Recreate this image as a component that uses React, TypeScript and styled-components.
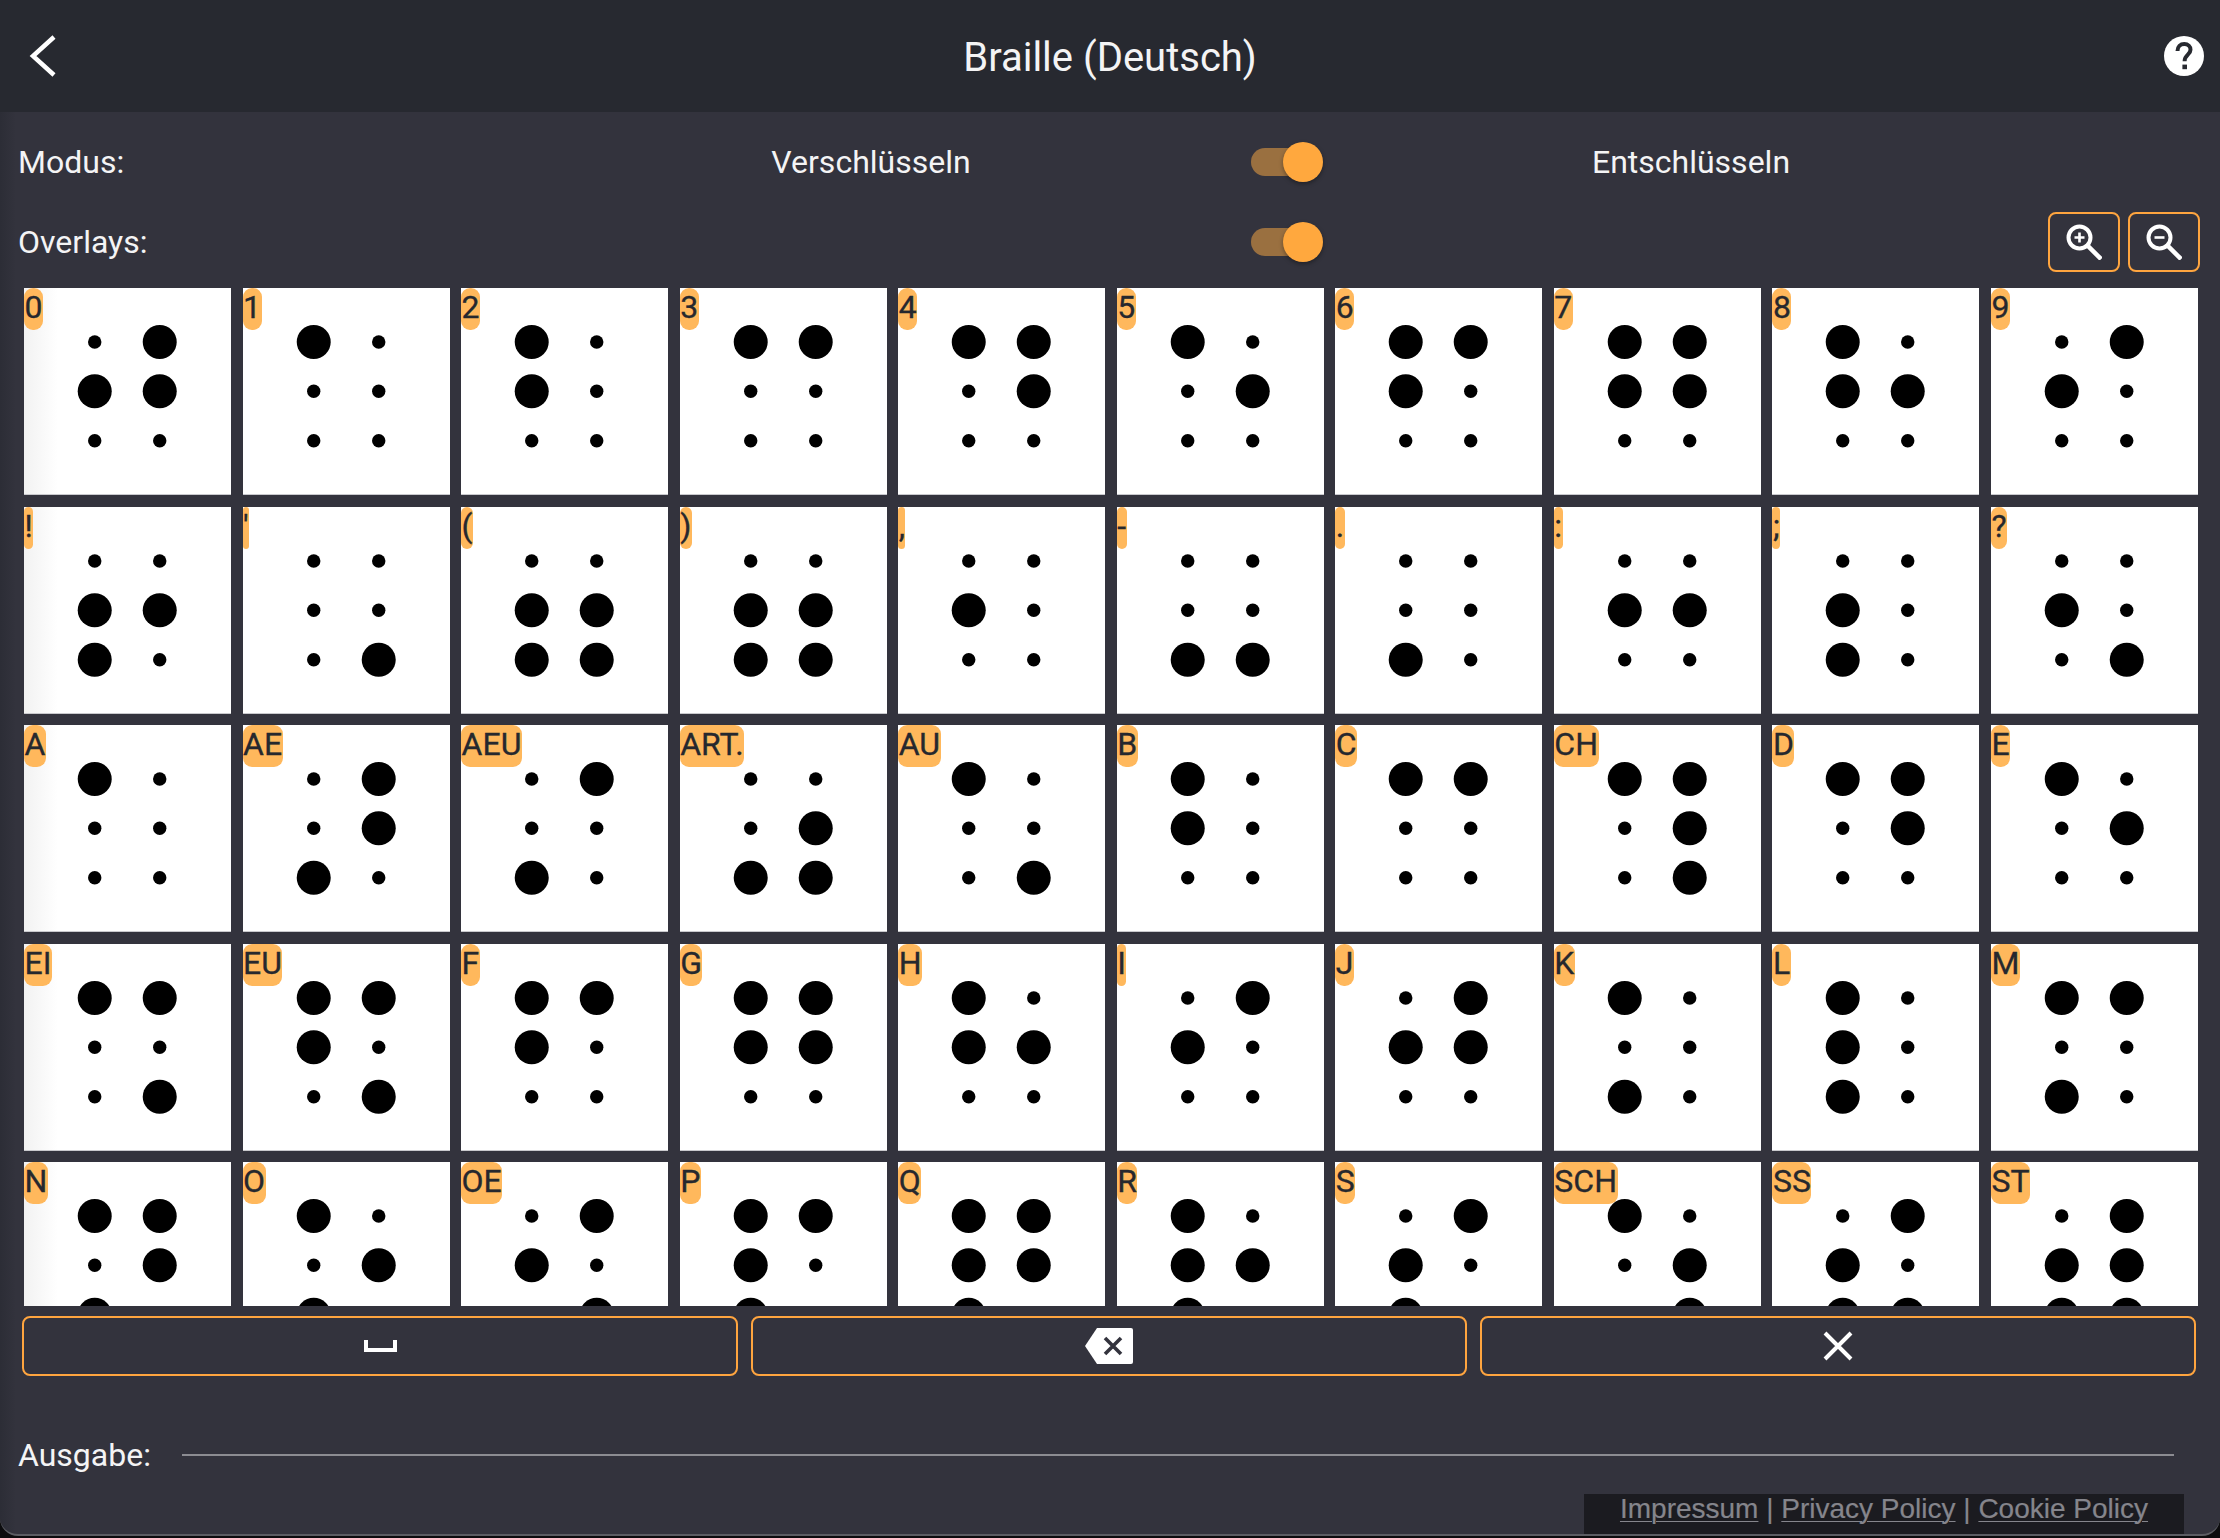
import React from "react";
import styled, { createGlobalStyle } from "styled-components";

const GlobalStyle = createGlobalStyle`
  html, body {
    margin: 0;
    padding: 0;
    background: #0c0c0e;
  }
  * {
    box-sizing: border-box;
  }
`;

const Page = styled.div`
  position: relative;
  width: 2220px;
  height: 1536px;
  overflow: hidden;
  border-bottom: 2px solid #5c5d63;
  border-radius: 0 0 18px 18px;
  background: linear-gradient(90deg, #2c2d36 0, #33333d 16px);
  color: #f4f4f5;
  font-family: Roboto, "Liberation Sans", sans-serif;
`;

const Header = styled.header`
  display: grid;
  grid-template-columns: 1fr auto 1fr;
  align-items: center;
  height: 112px;
  padding: 0 16px;
  background: #272930;
`;

const Title = styled.h1`
  margin: 2px 0 0;
  font-size: 40px;
  font-weight: 400;
`;

const HeaderIcon = styled.svg<{ $end?: boolean }>`
  display: block;
  justify-self: ${(props) => (props.$end ? "end" : "start")};
  margin-left: ${(props) => (props.$end ? "0" : "12px")};
`;

const Controls = styled.section`
  padding: 10px 20px 0 18px;
`;

const ControlRow = styled.div`
  display: grid;
  grid-template-columns: 562px 582px 250px 558px 1fr;
  align-items: center;
  height: 80px;
  font-size: 32px;
`;

const CenterText = styled.span`
  text-align: center;
`;

const ToggleCell = styled.div`
  display: flex;
  justify-content: center;
`;

const Toggle = styled.div`
  position: relative;
  width: 72px;
  height: 40px;
  display: flex;
  align-items: center;
`;

const Track = styled.div`
  width: 60px;
  height: 28px;
  border-radius: 14px;
  background: #9a7040;
`;

const Thumb = styled.div`
  position: absolute;
  top: 0;
  right: 0;
  width: 40px;
  height: 40px;
  border-radius: 50%;
  background: #ffa83e;
  box-shadow: 0 2px 4px rgba(0, 0, 0, 0.35);
`;

const ZoomButtons = styled.div`
  display: flex;
  justify-content: flex-end;
  gap: 8px;
`;

const OutlineButton = styled.button<{ $w?: number }>`
  display: flex;
  align-items: center;
  justify-content: center;
  width: ${(props) => (props.$w ? props.$w + "px" : "auto")};
  height: 60px;
  padding: 0;
  border: 2px solid #ffa53f;
  border-radius: 8px;
  background: transparent;
`;

const Grid = styled.div`
  display: grid;
  grid-template-columns: repeat(10, 1fr);
  grid-auto-rows: 207px;
  gap: 11.5px;
  height: 1018px;
  margin: 6px 22px 0 24px;
  overflow: hidden;
`;

const Tile = styled.div<{ $first: boolean }>`
  position: relative;
  background: ${(props) =>
    props.$first ? "linear-gradient(90deg, #f2f2f2, #fff 34px)" : "#fff"};
  box-shadow: inset 0 -1px 0 #c9c9cd;
`;

const TileLabel = styled.span`
  position: absolute;
  top: 0;
  left: 0;
  height: 42px;
  padding: 0 0.5px;
  border-radius: 9px;
  background: #ffb85c;
  color: #26282e;
  font-size: 32px;
  line-height: 38px;
  -webkit-text-stroke: 0.3px #26282e;
`;

const Cell = styled.svg`
  display: block;
  width: 100%;
  height: 100%;
`;

const KeyRow = styled.div`
  display: grid;
  grid-template-columns: repeat(3, 1fr);
  gap: 13px;
  margin: 10px 24px 0 22px;
`;

const OutputRow = styled.div`
  display: flex;
  align-items: center;
  gap: 31px;
  height: 60px;
  margin-top: 49px;
  padding: 0 46px 0 18px;
  font-size: 32px;
`;

const OutputLine = styled.div`
  flex: 1;
  height: 2px;
  background: #8c8c92;
`;

const Footer = styled.footer`
  position: absolute;
  right: 36px;
  bottom: 0;
  width: 600px;
  height: 40px;
  padding-top: 1px;
  background: #1b1b20;
  color: #85858c;
  font-family: "Liberation Sans", Arial, sans-serif;
  font-size: 28px;
  line-height: 28px;
  text-align: center;
  -webkit-text-stroke: 0.2px #85858c;
`;

const FooterLink = styled.a`
  color: inherit;
  text-decoration: underline;
  text-underline-offset: 3px;
  text-decoration-thickness: 1px;
`;

// raised dots per cell: 1-3 left column, 4-6 right column
const CELLS: [string, string][] = [
  ["0", "245"], ["1", "1"], ["2", "12"], ["3", "14"], ["4", "145"],
  ["5", "15"], ["6", "124"], ["7", "1245"], ["8", "125"], ["9", "24"],
  ["!", "235"], ["'", "6"], ["(", "2356"], [")", "2356"], [",", "2"],
  ["-", "36"], [".", "3"], [":", "25"], [";", "23"], ["?", "26"],
  ["A", "1"], ["AE", "345"], ["AEU", "34"], ["ART.", "356"], ["AU", "16"],
  ["B", "12"], ["C", "14"], ["CH", "1456"], ["D", "145"], ["E", "15"],
  ["EI", "146"], ["EU", "1246"], ["F", "124"], ["G", "1245"], ["H", "125"],
  ["I", "24"], ["J", "245"], ["K", "13"], ["L", "123"], ["M", "134"],
  ["N", "1345"], ["O", "135"], ["OE", "246"], ["P", "1234"], ["Q", "12345"],
  ["R", "1235"], ["S", "234"], ["SCH", "156"], ["SS", "2346"], ["ST", "23456"],
];

const DOTS = [
  { id: "1", x: 70.7, y: 54 },
  { id: "2", x: 70.7, y: 103.3 },
  { id: "3", x: 70.7, y: 152.7 },
  { id: "4", x: 135.7, y: 54 },
  { id: "5", x: 135.7, y: 103.3 },
  { id: "6", x: 135.7, y: 152.7 },
];

function BrailleTile({ label, dots, first }: { label: string; dots: string; first: boolean }) {
  return (
    <Tile $first={first}>
      <Cell viewBox="0 0 207 207">
        {DOTS.map((d) => (
          <circle key={d.id} cx={d.x} cy={d.y} r={dots.includes(d.id) ? 17 : 6.7} fill="#000" />
        ))}
      </Cell>
      <TileLabel>{label}</TileLabel>
    </Tile>
  );
}

function ToggleSwitch() {
  return (
    <ToggleCell>
      <Toggle>
        <Track />
        <Thumb />
      </Toggle>
    </ToggleCell>
  );
}

function ZoomIcon({ plus }: { plus: boolean }) {
  return (
    <svg width="36" height="36" viewBox="0 0 36 36" fill="none" stroke="#fff" strokeWidth="4">
      <circle cx="13.5" cy="13.5" r="11" />
      <path d="M22 22L33.5 33.5" strokeLinecap="square" strokeWidth="4.5" />
      <path d={plus ? "M8.5 13.5h10M13.5 8.5v10" : "M8.5 13.5h10"} strokeWidth="2.6" />
    </svg>
  );
}

export default function App() {
  return (
    <Page>
      <GlobalStyle />
      <Header>
        <HeaderIcon width="30" height="44" viewBox="0 0 30 44" fill="none" stroke="#fff" strokeWidth="4.5">
          <path d="M26 3L5 22l21 19" />
        </HeaderIcon>
        <Title>Braille (Deutsch)</Title>
        <HeaderIcon $end width="40" height="40" viewBox="0 0 40 40">
          <circle cx="20" cy="20" r="20" fill="#fff" />
          <path
            d="M13.5 15c0-4.5 2.8-7 6.8-7 3.8 0 6.2 2.4 6.2 5.7 0 5-5.9 5-5.9 11.5"
            fill="none"
            stroke="#272930"
            strokeWidth="4"
          />
          <rect x="18.4" y="28.6" width="4.6" height="4.6" fill="#272930" />
        </HeaderIcon>
      </Header>

      <Controls>
        <ControlRow>
          <span>Modus:</span>
          <CenterText>Verschlüsseln</CenterText>
          <ToggleSwitch />
          <CenterText>Entschlüsseln</CenterText>
        </ControlRow>
        <ControlRow>
          <span>Overlays:</span>
          <span />
          <ToggleSwitch />
          <span />
          <ZoomButtons>
            <OutlineButton $w={72}>
              <ZoomIcon plus />
            </OutlineButton>
            <OutlineButton $w={72}>
              <ZoomIcon plus={false} />
            </OutlineButton>
          </ZoomButtons>
        </ControlRow>
      </Controls>

      <Grid>
        {CELLS.map(([label, dots], i) => (
          <BrailleTile key={label + i} label={label} dots={dots} first={i % 10 === 0} />
        ))}
      </Grid>

      <KeyRow>
        <OutlineButton>
          <svg width="33" height="12" viewBox="0 0 33 12" fill="none" stroke="#fff" strokeWidth="4">
            <path d="M2 0v10h29V0" />
          </svg>
        </OutlineButton>
        <OutlineButton>
          <svg width="48" height="36" viewBox="0 0 48 36">
            <path d="M12 0h34a2 2 0 0 1 2 2v32a2 2 0 0 1-2 2H12L0 18z" fill="#fff" />
            <path d="M20 10l16 16M36 10L20 26" stroke="#33333d" strokeWidth="3.6" fill="none" />
          </svg>
        </OutlineButton>
        <OutlineButton>
          <svg width="30" height="30" viewBox="0 0 30 30" fill="none" stroke="#fff" strokeWidth="4">
            <path d="M2 2l26 26M28 2L2 28" />
          </svg>
        </OutlineButton>
      </KeyRow>

      <OutputRow>
        <span>Ausgabe:</span>
        <OutputLine />
      </OutputRow>

      <Footer>
        <FooterLink>Impressum</FooterLink> | <FooterLink>Privacy Policy</FooterLink> |{" "}
        <FooterLink>Cookie Policy</FooterLink>
      </Footer>
    </Page>
  );
}
